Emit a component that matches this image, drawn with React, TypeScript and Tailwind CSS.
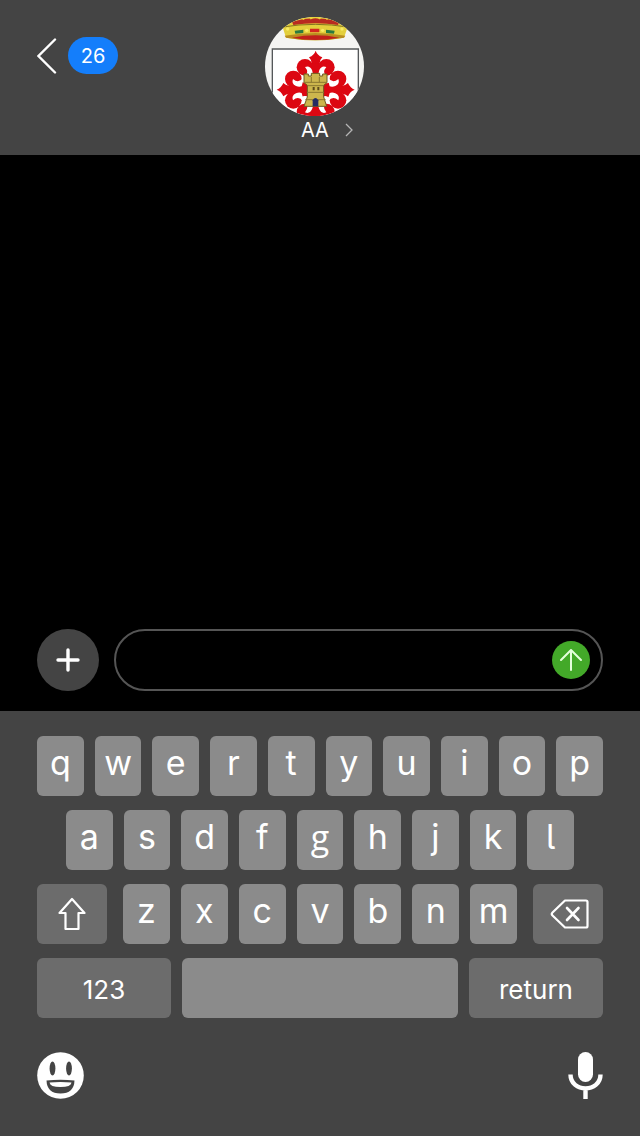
import type { ReactNode } from 'react'
import { clsx } from 'clsx'

const TOP_ROW = ['q', 'w', 'e', 'r', 't', 'y', 'u', 'i', 'o', 'p']
const HOME_ROW = ['a', 's', 'd', 'f', 'g', 'h', 'j', 'k', 'l']
const BOTTOM_ROW = ['z', 'x', 'c', 'v', 'b', 'n', 'm']
const ARMS = [0, 90, 180, 270]

function Crest() {
  return (
    <svg viewBox="31 36 297 297" className="size-[99px] rounded-full bg-[#f4f4f2]" aria-hidden="true">
      {/* shield */}
      <path d="M53 340V132H311V340" fill="#fff" stroke="#55585a" strokeWidth="4" />

      {/* crown */}
      <path d="M84 66 90 40 120 30H246L270 40 279 66 268 98Q182 114 94 98Z" fill="#e3cf3c" />
      <path d="M112 50Q182 30 254 50L250 60Q182 50 116 60Z" fill="#b92a20" />
      <path d="M122 42q14-10 28 0M166 40q16-10 32 0M214 42q14-10 28 0" fill="none" stroke="#e9d83e" strokeWidth="8" />
      <path d="M84 66Q182 50 279 66" fill="none" stroke="#83741f" strokeWidth="3" />
      <path d="M90 92Q182 76 272 92L268 98Q182 114 94 98Z" fill="#b98d20" />
      <path d="M112 98Q182 84 254 98Q182 112 112 98Z" fill="#c1201c" />
      <path d="M120 77 146 74V84L122 86ZM214 74 240 77 238 86 214 84Z" fill="#2c7a3f" />
      <path d="M166 71H194V82H166Z" fill="#d3281f" />
      <g fill="#f7ea62">
        <circle cx="99" cy="72" r="5" />
        <circle cx="156" cy="76" r="5" />
        <circle cx="204" cy="76" r="5" />
        <circle cx="262" cy="72" r="5" />
      </g>

      {/* cross fleury */}
      {ARMS.map(angle => (
        <g key={angle} transform={`rotate(${angle} 183 254)`} fill="#dc0712">
          <path d="M183 137Q187 150 203 157Q195 165 195 175L204 240H162L171 175Q171 165 163 157Q179 150 183 137Z" />
          <circle cx="151" cy="187" r="25" />
          <circle cx="215" cy="187" r="25" />
          <path d="M151 175H215V190L196 240H170Z" />
        </g>
      ))}
      {ARMS.map(angle => (
        <g key={angle} transform={`rotate(${angle} 183 254)`} fill="#fff">
          <path d="M151 186Q165 180 172 195Q176 204 173 212Q160 217 148 216Q166 203 151 186Z" />
          <path d="M215 186Q201 180 194 195Q190 204 193 212Q206 217 218 216Q200 203 215 186Z" />
        </g>
      ))}

      {/* castle */}
      <path d="M148 207H161V213H170V205H195V213H204V207H217V233L207 241V276L216 304H148L158 276V241L148 233Z" fill="#cdb64d" stroke="#6d5a20" strokeWidth="3" />
      <path d="M150 232H215M158 242H207M157 262H208M152 284H213M170 216V232M194 216V232" stroke="#8b772f" strokeWidth="3" />
      <path d="M174 304V286Q182 272 191 286V304Z" fill="#242c62" />
      <path d="M174 246H180V256H174ZM188 246H194V256H188Z" fill="#5e4b1b" />
    </svg>
  )
}

function Key({ children, dark, className, label }: { children?: ReactNode; dark?: boolean; className?: string; label?: string }) {
  return (
    <button
      type="button"
      aria-label={label}
      className={clsx('flex h-[60px] items-center justify-center rounded-md', dark ? 'bg-[#6c6c6c]' : 'bg-[#8b8b8b]', className)}
    >
      {children}
    </button>
  )
}

function LetterKeys({ letters }: { letters: string[] }) {
  return letters.map(letter => (
    <Key key={letter} className="min-w-0 flex-1 pb-1.5 text-[34px] leading-none">
      {/* the keyboard face has a two-storey g */}
      <span className={letter === 'g' ? "font-['Open_Sans',sans-serif]" : undefined}>{letter}</span>
    </Key>
  ))
}

export default function App() {
  return (
    <div className="flex min-h-screen flex-col bg-black font-['Inter',sans-serif] text-white [font-feature-settings:'cv05']">
      <header className="grid grid-cols-[1fr_auto_1fr] bg-[#444444] pt-[17px] pr-12 pb-[11px] pl-[37px]">
        <a href="#conversations" aria-label="Back, 26 unread" className="flex items-center gap-[11px] self-start pt-5">
          <svg viewBox="0 0 20 36" className="h-9 w-5" fill="none" stroke="currentColor" strokeWidth="2.4" strokeLinecap="round" aria-hidden="true">
            <path d="M18 1.5 1.5 18 18 34.5" />
          </svg>
          <span className="flex h-[37px] w-[50px] items-center justify-center rounded-full bg-[#147efb] text-xl">26</span>
        </a>
        <div>
          <Crest />
          <a href="#contact" className="flex items-center gap-4 pl-9 text-xl leading-7">
            AA
            <svg viewBox="0 0 8 14" className="h-3.5 w-2" fill="none" stroke="#b5b5b5" strokeWidth="1.3" aria-hidden="true">
              <path d="M1 1 7 7 1 13" />
            </svg>
          </a>
        </div>
      </header>

      <main className="flex-1" />

      <form className="flex items-center gap-[15px] px-[37px] pb-5" onSubmit={e => e.preventDefault()}>
        <button type="button" aria-label="Add attachment" className="flex size-[62px] items-center justify-center rounded-full bg-[#444444]">
          <svg viewBox="0 0 24 24" className="size-6" stroke="currentColor" strokeWidth="3.4" strokeLinecap="round" aria-hidden="true">
            <path d="M12 2V22M2 12H22" />
          </svg>
        </button>
        <div className="flex h-[62px] min-w-0 flex-1 items-center rounded-full border-2 border-[#555555] pr-[11px] pl-6">
          <input type="text" aria-label="Message" className="min-w-0 flex-1 bg-transparent text-2xl outline-none" />
          <button type="submit" aria-label="Send" className="flex size-[38px] items-center justify-center rounded-full bg-[#43a929]">
            <svg viewBox="0 0 22 22" className="size-[22px]" fill="none" stroke="#e4ffdc" strokeWidth="2" strokeLinecap="round" strokeLinejoin="round" aria-hidden="true">
              <path d="M11 21V1M1 11 11 1 21 11" />
            </svg>
          </button>
        </div>
      </form>

      <section aria-label="Keyboard" className="bg-[#444444] px-[37px] pt-[25px] pb-[37px]">
        <div className="flex flex-col gap-3.5">
          <div className="flex gap-[11px]">
            <LetterKeys letters={TOP_ROW} />
          </div>
          <div className="flex gap-[11px] px-[29px]">
            <LetterKeys letters={HOME_ROW} />
          </div>
          <div className="flex gap-4">
            <Key dark label="Shift" className="w-[70px]">
              <svg viewBox="0 0 28 34" className="h-[34px] w-7" fill="none" stroke="currentColor" strokeWidth="2.2" strokeLinejoin="round" aria-hidden="true">
                <path d="M14 2 26.5 16H20.5V32H7.5V16H1.5Z" />
              </svg>
            </Key>
            <div className="flex min-w-0 flex-1 gap-[11px]">
              <LetterKeys letters={BOTTOM_ROW} />
            </div>
            <Key dark label="Delete" className="w-[70px] pl-1">
              <svg viewBox="0 0 40 30" className="h-[30px] w-10" fill="none" stroke="currentColor" strokeWidth="2.2" strokeLinecap="round" strokeLinejoin="round" aria-hidden="true">
                <path d="M15 1.5H36Q37.5 1.5 37.5 3V27Q37.5 28.5 36 28.5H15L2.5 16.5Q1 15 2.5 13.5Z" />
                <path d="M17 9 28.5 21M28.5 9 17 21" strokeWidth="2.6" />
              </svg>
            </Key>
          </div>
          <div className="flex gap-[11px]">
            <Key dark className="w-[134px] pt-0.5 text-[26px]">123</Key>
            <Key label="Space" className="flex-1" />
            <Key dark className="w-[134px] pt-0.5 text-[26px]">return</Key>
          </div>
        </div>

        <div className="flex items-center justify-between pt-[34px]">
          <button type="button" aria-label="Emoji">
            <svg viewBox="0 0 47 47" className="size-[47px]" aria-hidden="true">
              <circle cx="23.5" cy="23.5" r="23.3" fill="#fff" />
              <ellipse cx="15.5" cy="16.5" rx="2.9" ry="7" fill="#444" />
              <ellipse cx="32" cy="16.5" rx="2.9" ry="7" fill="#444" />
              <path d="M9.5 28.5Q23.5 27 37.5 28.5Q37 41.5 23.5 41.5T9.5 28.5Z" fill="#444" />
              <path d="M12.5 30.5Q23.5 29.5 34.5 30.5Q34 35 23.5 35T12.5 30.5Z" fill="#fff" />
            </svg>
          </button>
          <button type="button" aria-label="Dictate">
            <svg viewBox="0 0 35 47" className="h-[47px] w-[35px]" aria-hidden="true">
              <rect x="10" y="0" width="15" height="30" rx="7.5" fill="#fff" />
              <path d="M2.5 22.5C2.5 41 32.5 41 32.5 22.5M17.5 36V47" fill="none" stroke="#fff" strokeWidth="4.4" />
            </svg>
          </button>
        </div>
      </section>
    </div>
  )
}
